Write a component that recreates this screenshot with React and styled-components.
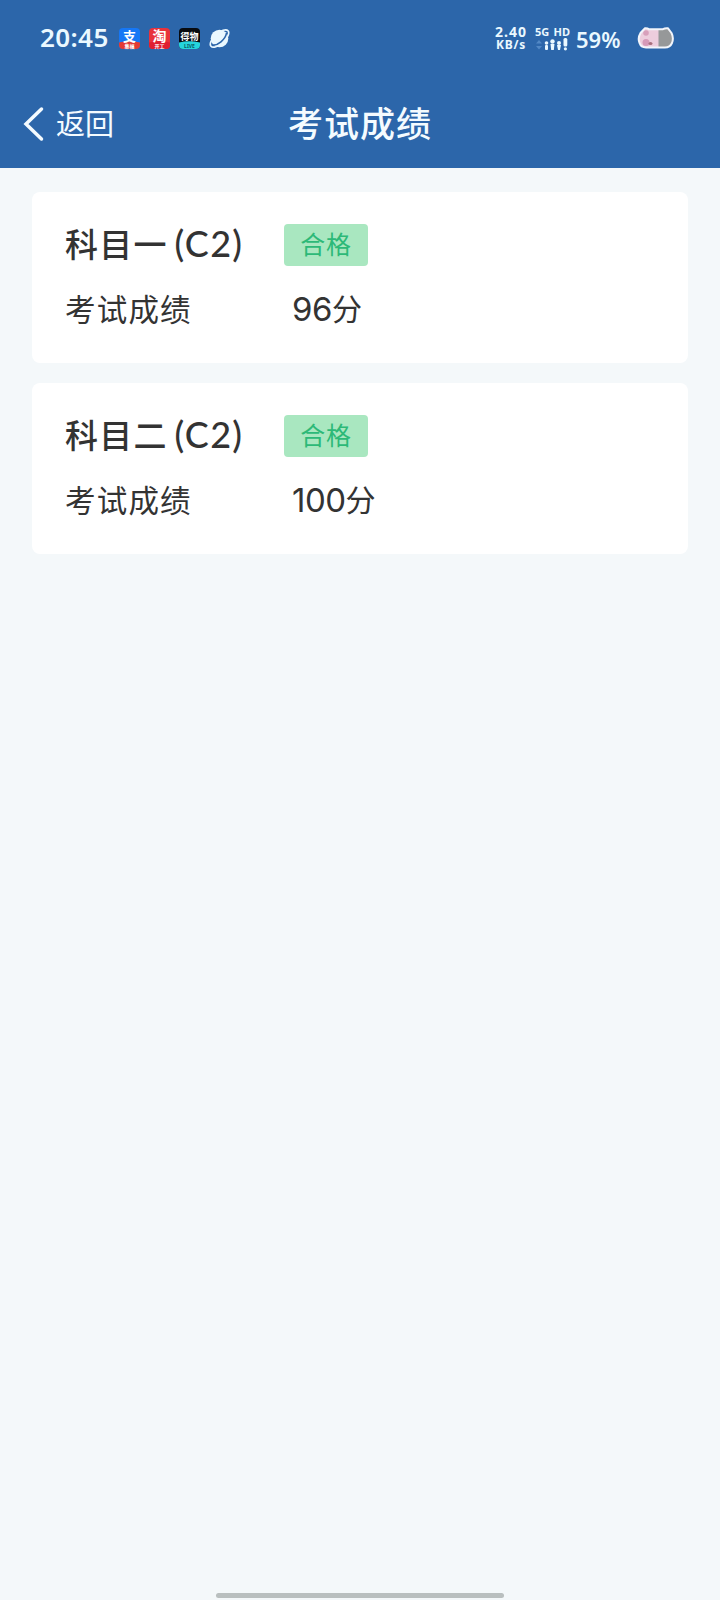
import styled, { createGlobalStyle } from "styled-components";

const GlobalStyle = createGlobalStyle`
  * {
    box-sizing: border-box;
  }

  body {
    margin: 0;
    background-color: #f4f8fa;
    font-family: "Noto Sans", "Noto Sans CJK SC", sans-serif;
  }
`;

const StyledScreen = styled.div`
  display: flex;
  flex-direction: column;
  width: 720px;
  height: 1600px;
  overflow: hidden;
`;

const StyledStatusBar = styled.div`
  display: flex;
  align-items: center;
  justify-content: space-between;
  height: 80px;
  padding: 0 45px 4px 40px;
  background-color: #2c66aa;
  color: #eaf8ff;
`;

const StatusGroup = styled.div`
  display: flex;
  align-items: center;
`;

const Clock = styled.span`
  width: 79px;
  padding-bottom: 2px;
  font-size: 26px;
  font-weight: 600;
  line-height: 36px;
  letter-spacing: 0.4px;
`;

const AppIcons = styled.div`
  display: flex;
  gap: 9px;
  padding-top: 1px;
`;

const AppIcon = styled.svg`
  display: block;
  width: 21px;
  height: 21px;
  overflow: visible;
`;

const Speed = styled.div`
  display: flex;
  flex-direction: column;
  align-items: center;
  width: 34px;
  font-weight: 700;
  white-space: nowrap;
`;

const SpeedValue = styled.span`
  font-size: 14px;
  line-height: 12px;
  letter-spacing: 1px;
`;

const SpeedUnit = styled.span`
  font-size: 12px;
  line-height: 13px;
  letter-spacing: 0.7px;
`;

const Network = styled.div`
  display: flex;
  flex-direction: column;
  width: 35px;
  margin-left: 7px;
`;

const NetworkLabels = styled.div`
  display: flex;
  justify-content: space-between;
  font-size: 11px;
  font-weight: 700;
  line-height: 12px;
`;

const Signal = styled.svg`
  display: block;
  width: 35px;
  height: 13px;
`;

const Percent = styled.span`
  width: 61px;
  margin-left: 6px;
  padding-top: 1px;
  font-size: 22px;
  font-weight: 600;
  line-height: 30px;
`;

const Battery = styled.svg`
  display: block;
  width: 38px;
  height: 24px;
`;

const StyledNav = styled.header`
  display: grid;
  grid-template-columns: 200px 1fr 200px;
  align-items: center;
  height: 88px;
  background-color: #2c66aa;
  color: #f4fbff;
`;

const BackButton = styled.button`
  display: flex;
  align-items: center;
  gap: 12px;
  padding: 0 0 0 23px;
  border: none;
  background: none;
  color: inherit;
  font-family: inherit;
  font-size: 29px;
  line-height: 40px;
`;

const Title = styled.h1`
  margin: 0;
  font-size: 35px;
  font-weight: 500;
  line-height: 48px;
  letter-spacing: 1px;
  text-align: center;
`;

const List = styled.main`
  display: flex;
  flex: 1;
  flex-direction: column;
  gap: 19.5px;
  padding: 24px 32px 0;
`;

const StyledCard = styled.section`
  display: flex;
  flex-direction: column;
  gap: 22px;
  height: 171px;
  padding: 32px 33px 0;
  border-radius: 8px;
  background-color: #fff;
  color: #333;
`;

const Row = styled.div`
  display: grid;
  grid-template-columns: 219px 1fr;
  align-items: center;
  height: 42px;
`;

const Subject = styled.h2`
  display: flex;
  align-items: center;
  gap: 7px;
  margin: 0;
  font-size: 33px;
  font-weight: 500;
  line-height: 42px;
  letter-spacing: 1.2px;
  white-space: nowrap;
`;

const Licence = styled.span`
  padding-bottom: 3px;
  font-family: Lato, sans-serif;
  font-size: 36px;
  line-height: 39px;
  letter-spacing: 1.3px;
`;

const Badge = styled.span`
  justify-self: start;
  width: 84px;
  height: 42px;
  border-radius: 4px;
  background-color: #a9e7c0;
  color: #2db978;
  font-size: 25px;
  line-height: 41px;
  letter-spacing: 0.8px;
  text-align: center;
`;

const Label = styled.span`
  font-size: 30.5px;
  line-height: 42px;
  letter-spacing: 1.2px;
`;

const Score = styled.span`
  display: flex;
  align-items: center;
  padding-left: 8px;
  font-size: 30px;
  line-height: 42px;
`;

const Points = styled.span`
  font-family: Inter, sans-serif;
  font-size: 33px;
  letter-spacing: -0.5px;
`;

const HomeIndicator = styled.div`
  align-self: center;
  width: 288px;
  height: 5px;
  margin-bottom: 2px;
  border-radius: 3px;
  background-color: #b9bfbf;
`;

const results = [
  { subject: "科目一", licence: "(C2)", status: "合格", points: 96 },
  { subject: "科目二", licence: "(C2)", status: "合格", points: 100 },
];

const appIcons = [
  { glyph: "支", size: 13, top: "#1677f5", bottom: "#e33a35", tag: "集福" },
  { glyph: "淘", size: 14, top: "#e8323b", bottom: "#e01f31", tag: "开工" },
  { glyph: "得物", size: 9, top: "#080b10", bottom: "#25d5dc", tag: "LIVE" },
];

function AppBadge({ icon }) {
  return (
    <AppIcon viewBox="0 0 21 21">
      <rect width="21" height="21" rx="4" fill={icon.top} />
      <path
        d="M0 14.5Q10 12 21 14.5V17a4 4 0 0 1-4 4H4a4 4 0 0 1-4-4Z"
        fill={icon.bottom}
      />
      <text
        x="10.5"
        y={icon.size > 10 ? 13 : 11.5}
        fontSize={icon.size}
        fontWeight="700"
        textAnchor="middle"
        fill="#fff"
      >
        {icon.glyph}
      </text>
      <text
        x="10.5"
        y="19.5"
        fontSize="5"
        fontWeight="700"
        textAnchor="middle"
        fill={icon.tag === "LIVE" ? "#075b65" : "#fff"}
      >
        {icon.tag}
      </text>
    </AppIcon>
  );
}

function StatusBar() {
  return (
    <StyledStatusBar>
      <StatusGroup>
        <Clock>20:45</Clock>
        <AppIcons>
          {appIcons.map((icon) => (
            <AppBadge key={icon.glyph} icon={icon} />
          ))}
          <AppIcon viewBox="0 0 21 21">
            <circle cx="10.5" cy="10.5" r="8.8" fill="#eaf8ff" />
            <ellipse
              cx="10.5"
              cy="10.5"
              rx="11.5"
              ry="5.2"
              transform="rotate(-42 10.5 10.5)"
              fill="none"
              stroke="#eaf8ff"
              strokeWidth="1.6"
            />
            <path
              d="M3.2 17C8.5 18 16.500 11.500 17.500 5"
              fill="none"
              stroke="#2c66aa"
              strokeWidth="1.6"
            />
          </AppIcon>
        </AppIcons>
      </StatusGroup>
      <StatusGroup>
        <Speed>
          <SpeedValue>2.40</SpeedValue>
          <SpeedUnit>KB/s</SpeedUnit>
        </Speed>
        <Network>
          <NetworkLabels>
            <span>5G</span>
            <span>HD</span>
          </NetworkLabels>
          <Signal viewBox="0 0 35 13">
            <path d="M1 5.5 4 2l3 3.5ZM1 8l3 3.5L7 8Z" fill="#5288c5" />
            <g fill="#eaf8ff">
              <circle cx="11.5" cy="5" r="1.8" />
              <rect x="10" y="7" width="3" height="5" rx="1" />
              <circle cx="17.5" cy="3.5" r="2.2" />
              <path d="M15.5 6h4L18.8 12h-2.6Z" />
              <circle cx="24" cy="5" r="2" />
              <path d="M22 7h4L25 12h-2Z" />
              <rect x="28.5" y="0" width="3.8" height="8.500" rx="1.5" />
              <circle cx="30.4" cy="10.8" r="1.6" />
            </g>
          </Signal>
        </Network>
        <Percent>59%</Percent>
        <Battery viewBox="0 0 38 24">
          <defs>
            <clipPath id="battery">
              <path d="M8 2.2Q10.5 2 12 3.2H26Q28 2 31 2.3L34.5 7Q37 12 35 17Q33 21.5 28 21.5H9Q4 21.5 2.5 17Q0.5 12 3.5 7Z" />
            </clipPath>
          </defs>
          <g clipPath="url(#battery)">
            <rect width="22" height="24" fill="#edcddd" />
            <rect x="21.5" width="17" height="24" fill="#969899" />
            <circle cx="9" cy="7" r="2.8" fill="#d8a0bb" />
            <circle cx="9" cy="16.5" r="3.5" fill="#d69ab8" />
            <ellipse cx="13.5" cy="17.5" rx="2" ry="1.5" fill="#a86f7d" />
          </g>
          <path
            d="M8 2.2Q10.5 2 12 3.2H26Q28 2 31 2.3L34.5 7Q37 12 35 17Q33 21.5 28 21.5H9Q4 21.5 2.5 17Q0.5 12 3.5 7Z"
            fill="none"
            stroke="#f2f5fb"
            strokeWidth="2"
            strokeLinejoin="round"
          />
        </Battery>
      </StatusGroup>
    </StyledStatusBar>
  );
}

function Nav() {
  return (
    <StyledNav>
      <BackButton>
        <svg width="21" height="36" viewBox="0 0 21 36" fill="none">
          <path
            d="M18.5 3 3 18l15.5 15"
            stroke="currentColor"
            strokeWidth="3.5"
            strokeLinecap="round"
          />
        </svg>
        返回
      </BackButton>
      <Title>考试成绩</Title>
    </StyledNav>
  );
}

function ResultCard({ result }) {
  return (
    <StyledCard>
      <Row>
        <Subject>
          {result.subject}
          <Licence>{result.licence}</Licence>
        </Subject>
        <Badge>{result.status}</Badge>
      </Row>
      <Row>
        <Label>考试成绩</Label>
        <Score>
          <Points>{result.points}</Points>分
        </Score>
      </Row>
    </StyledCard>
  );
}

function App() {
  return (
    <>
      <GlobalStyle />
      <StyledScreen>
        <StatusBar />
        <Nav />
        <List>
          {results.map((result) => (
            <ResultCard key={result.subject} result={result} />
          ))}
        </List>
        <HomeIndicator />
      </StyledScreen>
    </>
  );
}

export default App;
